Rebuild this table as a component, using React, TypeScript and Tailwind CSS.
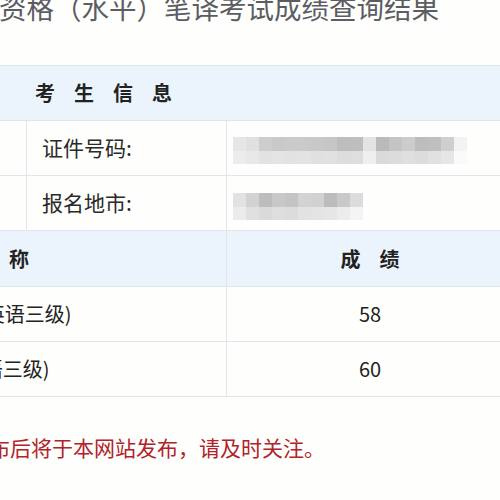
import React from "react";

// pixelated (mosaic) placeholders for the hidden personal data
const idTop = ["#e6e6e6", "#e0e0e0", "#cdcdcd", "#c9c9c9", "#cbcbcb", "#cacaca", "#c8c8c8", "#c6c6c6", "#bdbdbd", "#bebebe", "#e3e3e3", "#bababa", "#c4c4c4", "#cccccc", "#bdbdbd", "#bfbfbf", "#cfcfcf", "#f3f3f3"];
const idBottom = ["#ececec", "#e8e8e8", "#e2e2e2", "#e4e4e4", "#e2e2e2", "#e3e3e3", "#e0e0e0", "#e1e1e1", "#dddddd", "#dedede", "#efefef", "#dadada", "#dcdcdc", "#dfdfdf", "#dcdcdc", "#e1e1e1", "#e6e6e6", "#fafafa"];
const cityTop = ["#e2e2e2", "#d2d2d2", "#bdbdbd", "#c8c8c8", "#c4c4c4", "#d3d3d3", "#d1d1d1", "#bcbcbc", "#c9c9c9", "#dcdcdc"];
const cityBottom = ["#ebebeb", "#e0e0e0", "#dadada", "#dedede", "#dcdcdc", "#e2e2e2", "#e4e4e4", "#e6e6e6", "#ececec", "#f4f4f4"];

const Mosaic: React.FC<{ top: string[]; bottom: string[] }> = ({ top, bottom }) => (
    <div className="flex flex-col blur-[0.6px]">
        <div className="flex">
            {top.map((c, i) => (
                <div key={i} className="w-[13px] h-[14px]" style={{ backgroundColor: c }} />
            ))}
        </div>
        <div className="flex">
            {bottom.map((c, i) => (
                <div key={i} className="w-[13px] h-[13px]" style={{ backgroundColor: c }} />
            ))}
        </div>
    </div>
);

const scores = [
    { name: "笔译综合能力(英语三级)", score: "58", shift: "ml-[-142px]" },
    { name: "笔译实务(英语三级)", score: "60", shift: "ml-[-124px]" },
];

export default function App() {
    return (
        <div
            className="w-[500px] h-[500px] overflow-hidden bg-[#fefefc] text-[#222]"
            style={{ fontFamily: '"Noto Sans CJK SC", "Noto Sans", sans-serif' }}
        >
            <div className="h-[65px] flex items-start">
                <h1 className="mt-[-7px] ml-[-1px] text-[27.5px] leading-[28px] text-[#5b5d62] whitespace-nowrap">
                    资格（水平）笔译考试成绩查询结果
                </h1>
            </div>

            <div className="w-[540px] border-t border-[#dfe4ea]">
                {/* candidate info */}
                <div className="h-[55px] bg-[#ebf4fc] border-b border-[#dfe4ea] flex items-center pl-[35px]">
                    <span className="text-[20px] font-bold tracking-[19px]">考生信息</span>
                </div>
                <div className="h-[55px] flex border-b border-[#e3e6e9]">
                    <div className="w-[27px] border-r border-[#e3e6e9]" />
                    <div className="w-[200px] border-r border-[#e3e6e9] flex items-center pl-[15px] text-[21px] text-[#2a2a2a]">
                        证件号码:
                    </div>
                    <div className="flex-1 flex items-center pl-[6px] pt-[5px]">
                        <Mosaic top={idTop} bottom={idBottom} />
                    </div>
                </div>
                <div className="h-[55px] flex border-b border-[#e3e6e9]">
                    <div className="w-[27px] border-r border-[#e3e6e9]" />
                    <div className="w-[200px] border-r border-[#e3e6e9] flex items-center pl-[15px] text-[21px] text-[#2a2a2a]">
                        报名地市:
                    </div>
                    <div className="flex-1 flex items-center pl-[6px] pt-[6px]">
                        <Mosaic top={cityTop} bottom={cityBottom} />
                    </div>
                </div>

                {/* scores */}
                <div className="h-[56px] bg-[#ebf4fc] border-b border-[#dfe4ea] flex">
                    <div className="w-[227px] border-r border-[#e3e6e9] flex items-center overflow-hidden">
                        <span className="ml-[-108px] text-[20px] font-bold tracking-[19px] whitespace-nowrap">科目名称</span>
                    </div>
                    <div className="w-[286px] flex items-center justify-center pl-[19px]">
                        <span className="text-[20px] font-bold tracking-[19px]">成绩</span>
                    </div>
                </div>
                {scores.map((s) => (
                    <div key={s.score} className="h-[55px] flex border-b border-[#e3e6e9]">
                        <div className="w-[227px] border-r border-[#e3e6e9] flex items-center overflow-hidden">
                            <span className={`text-[20px] whitespace-nowrap ${s.shift}`}>{s.name}</span>
                        </div>
                        <div className="w-[286px] flex items-center justify-center text-[20px]">
                            {s.score}
                        </div>
                    </div>
                ))}
            </div>

            <p className="mt-[35px] ml-[-11px] text-[21px] text-[#b0232a] whitespace-nowrap">
                布后将于本网站发布，请及时关注。
            </p>
        </div>
    );
}
